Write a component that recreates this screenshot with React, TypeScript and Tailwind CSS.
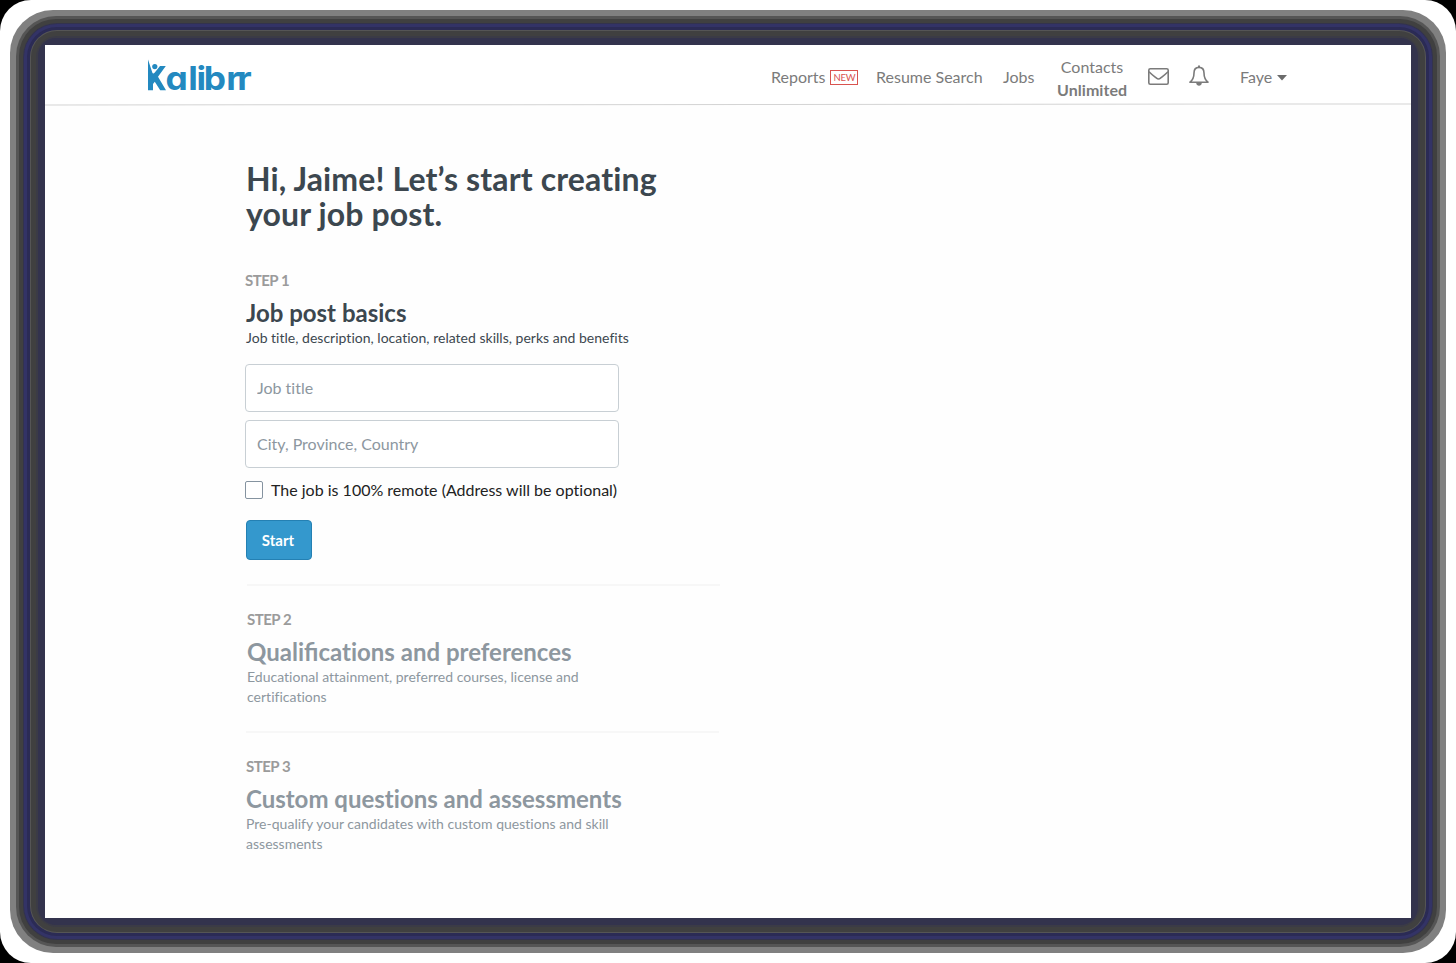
import type { ReactNode } from "react";

function Logo() {
  return (
    <svg width="106" height="40" viewBox="0 0 106 40" className="block shrink-0 overflow-visible" aria-label="Kalibrr">
      <g fill="#2389c0">
        <path d="M1 3.5 L5.3 16.6 Q6 18.6 7.8 16.6 L13 10 H18.8 L11 20.8 L19 34.3 H13.2 L7.8 25.8 L6 28 V34.3 H1 Z" />
        <circle cx="7.8" cy="10.6" r="2.6" />
      </g>
      <text x="17.2 38.5 46.2 53.1 74 84.3" y="34.2" transform="scale(1.07 1)" fill="#2389c0" className="font-['Inter'] text-[33px] font-bold [font-feature-settings:'cv11']">
        alibrr
      </text>
    </svg>
  );
}

function MailIcon() {
  return (
    <svg width="21" height="17" viewBox="0 0 21 17" fill="none" stroke="#7b7b7b" strokeWidth="1.6" strokeLinejoin="round">
      <rect x="0.8" y="0.8" width="19.4" height="15.4" rx="1.5" />
      <path d="M1 3.7 C4 6.7 6.3 8.4 8.5 10.2 Q10.5 11.8 12.5 10.2 C14.7 8.4 17 6.7 20 3.7" />
    </svg>
  );
}

function BellIcon() {
  return (
    <svg width="20" height="22" viewBox="0 0 20 22" fill="none" stroke="#7b7b7b" strokeWidth="1.6" strokeLinejoin="round">
      <path d="M10 2.4 C6.8 2.4 5 4.8 5 8 C5 12.7 3.5 15.2 1 17.2 H19 C16.5 15.2 15 12.7 15 8 C15 4.8 13.2 2.4 10 2.4 Z" />
      <path d="M10 0.4 V2.4" strokeWidth="2" />
      <path d="M7.2 18 Q7.6 20.8 10 20.8 Q12.4 20.8 12.8 18 Z" fill="#7b7b7b" stroke="none" />
    </svg>
  );
}

function Step({ n, title, children, active = false, className = "" }: { n: number; title: ReactNode; children: ReactNode; active?: boolean; className?: string }) {
  return (
    <section className={className}>
      <p className={`-mt-px text-[15px] leading-5 font-bold tracking-[-0.5px] text-[#9b9b9b] ${active ? "-ml-px" : ""}`}>STEP {n}</p>
      <h2 className={`mt-[7px] text-2xl leading-8 font-bold whitespace-nowrap ${active ? "text-[#3c474f]" : "text-[#8d979f]"}`}>{title}</h2>
      <p className={`-mt-px text-[14px] leading-5 tracking-[0.015px] ${active ? "text-[#3c474f]" : "text-[#8d979f]"}`}>{children}</p>
    </section>
  );
}

export default function App() {
  return (
    <div className="h-[963px] w-[1456px] bg-black font-['Lato',sans-serif] [font-variant-ligatures:none]">
      <div className="h-full rounded-[31px] bg-white p-[10px]">
        <div className="h-full rounded-[43px] bg-[#808080] p-[6px]">
          <div className="h-full rounded-[40px] bg-[#555555] p-[3px]">
            <div className="h-full rounded-[37px] bg-[#404040] p-[4px]">
              <div className="h-full rounded-[34px] bg-[#33334d] p-px">
                <div className="h-full rounded-[33px] bg-[#333366] p-[3px]">
                  <div className="h-full rounded-[30px] bg-[#2b2b55] p-[3px]">
                    <div className="h-full rounded-[27px] bg-[#555555] p-px">
                      <div className="h-full rounded-[26px] bg-[#404040] p-[5px]">
                        <div className="h-full rounded-[21px] bg-[#3b3b46] p-[2px]">
                          <div className="h-full rounded-[18px] bg-[#33334d] p-[7px]">
                            <Page />
                          </div>
                        </div>
                      </div>
                    </div>
                  </div>
                </div>
              </div>
            </div>
          </div>
        </div>
      </div>
    </div>
  );
}

function Page() {
  return (
    <div className="h-full overflow-hidden bg-[#fefefe]">
      <header className="flex h-[59px] items-start bg-white pl-[102px] text-base leading-[22px] text-[#7b7b7b]">
        <div className="pt-[11px]">
          <Logo />
        </div>
        <nav className="ml-[518px] flex items-start whitespace-nowrap">
          <div className="flex w-[105px] items-center pt-[21px]">
            Reports
            <span className="ml-[5px] flex h-[15px] w-7 items-center justify-center border border-[#d9534f] pt-px text-[9.5px] leading-none tracking-[-0.2px] text-[#d9534f]">NEW</span>
          </div>
          <span className="w-[127px] pt-[21px]">Resume Search</span>
          <span className="w-[54px] pt-[21px]">Jobs</span>
          <div className="w-[70px] pt-[10px] text-center leading-[23px]">
            Contacts
            <br />
            <b className="tracking-[0.05px]">Unlimited</b>
          </div>
          <div className="ml-[21px] pt-[23px]"><MailIcon /></div>
          <div className="ml-5 pt-5"><BellIcon /></div>
          <div className="ml-[31px] flex items-center pt-[21px]">
            Faye
            <svg width="10" height="6" viewBox="0 0 10 6" className="mt-px ml-[5px]"><path d="M0 0 H10 L5 5.5 Z" fill="#6b6b6b" /></svg>
          </div>
        </nav>
      </header>
      <div className="h-px origin-center rotate-[-0.04deg] bg-[#d4d4d4]" />

      <main className="ml-[201px] w-[474px] pt-[56px]">
        <h1 className="text-[32px] leading-[35px] font-bold tracking-[0.13px] whitespace-nowrap text-[#3c474f]">
          Hi, Jaime! Let’s start creating
          <br />
          your job post.
        </h1>
        <Step n={1} title="Job post basics" active className="mt-[40px]">
          Job title, description, location, related skills, perks and benefits
        </Step>
        <form className="mt-4 -ml-px flex flex-col gap-2" onSubmit={(e) => e.preventDefault()}>
          <input placeholder="Job title" className="h-12 w-[374px] rounded border border-[#c8cfd4] bg-white px-[11px] pb-0.5 text-base placeholder:text-[#8d979f]" />
          <input placeholder="City, Province, Country" className="h-12 w-[374px] rounded border border-[#c8cfd4] bg-white px-[11px] pb-0.5 text-base placeholder:text-[#8d979f]" />
          <label className="mt-[3px] flex h-[22px] items-center gap-2 text-base text-[#222]">
            <input type="checkbox" className="size-[18px] appearance-none rounded-[2px] border border-[#8593a0] bg-white" />
            The job is 100% remote (Address will be optional)
          </label>
          <button className="mt-[11px] ml-px h-10 w-[66px] rounded border border-[#2480b3] bg-[#3498cd] pt-px pr-0.5 text-[15px] font-bold text-white">Start</button>
        </form>
        <div className="mt-6 ml-px h-0.5 bg-[#f7f7f7]" />
        <Step
          n={2}
          title={<>Quali<span className="[font-variant-ligatures:normal]">fi</span>cations and preferences</>}
          className="ml-px w-[350px] pt-6"
        >
          Educational attainment, preferred courses, license and certifications
        </Step>
        <div className="mt-6 mr-px h-0.5 bg-[#f7f7f7]" />
        <Step n={3} title="Custom questions and assessments" className="w-[374px] pt-6">
          Pre-qualify your candidates with custom questions and skill assessments
        </Step>
      </main>
    </div>
  );
}
